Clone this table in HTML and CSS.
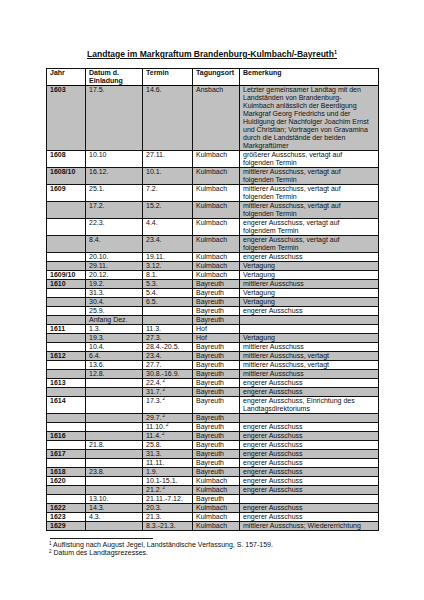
FILE: index.html
```html
<!DOCTYPE html>
<html lang="de">
<head>
<meta charset="utf-8">
<title>Landtage im Markgraftum Brandenburg-Kulmbach/-Bayreuth</title>
<link rel="stylesheet" href="styles.css">
</head>
<body>
<div class="page">
  <h1 class="title">Landtage im Markgraftum Brandenburg-Kulmbach/-Bayreuth<sup class="title-fn">1</sup></h1>
  <table class="lt">
    <colgroup>
      <col class="c-jahr"><col class="c-datum"><col class="c-termin"><col class="c-ort"><col class="c-bem">
    </colgroup>
    <thead>
      <tr><th>Jahr</th><th>Datum d.<br>Einladung</th><th>Termin</th><th>Tagungsort</th><th>Bemerkung</th></tr>
    </thead>
    <tbody>
      <tr><td class="y">1603</td><td>17.5.</td><td>14.6.</td><td>Ansbach</td><td>Letzter gemeinsamer Landtag mit den<br>Landständen von Brandenburg-<br>Kulmbach anlässlich der Beerdigung<br>Markgraf Georg Friedrichs und der<br>Huldigung der Nachfolger Joachim Ernst<br>und Christian; Vortragen von Gravamina<br>durch die Landstände der beiden<br>Markgraftümer</td></tr>
      <tr><td class="y">1608</td><td>10.10</td><td>27.11.</td><td>Kulmbach</td><td>größerer Ausschuss, vertagt auf<br>folgenden Termin</td></tr>
      <tr><td class="y">1608/10</td><td>16.12.</td><td>10.1.</td><td>Kulmbach</td><td>mittlerer Ausschuss, vertagt auf<br>folgenden Termin</td></tr>
      <tr><td class="y">1609</td><td>25.1.</td><td>7.2.</td><td>Kulmbach</td><td>mittlerer Ausschuss, vertagt auf<br>folgenden Termin</td></tr>
      <tr><td class="y"></td><td>17.2.</td><td>15.2.</td><td>Kulmbach</td><td>mittlerer Ausschuss, vertagt auf<br>folgenden Termin</td></tr>
      <tr><td class="y"></td><td>22.3.</td><td>4.4.</td><td>Kulmbach</td><td>engerer Ausschuss, vertagt auf<br>folgendem Termin</td></tr>
      <tr><td class="y"></td><td>8.4.</td><td>23.4.</td><td>Kulmbach</td><td>engerer Ausschuss, vertagt auf<br>folgendem Termin</td></tr>
      <tr><td class="y"></td><td>20.10.</td><td>19.11.</td><td>Kulmbach</td><td>engerer Ausschuss</td></tr>
      <tr><td class="y"></td><td>29.11.</td><td>3.12.</td><td>Kulmbach</td><td>Vertagung</td></tr>
      <tr><td class="y">1609/10</td><td>20.12.</td><td>8.1.</td><td>Kulmbach</td><td>Vertagung</td></tr>
      <tr><td class="y">1610</td><td>19.2.</td><td>5.3.</td><td>Bayreuth</td><td>mittlerer Ausschuss</td></tr>
      <tr><td class="y"></td><td>31.3.</td><td>5.4.</td><td>Bayreuth</td><td>Vertagung</td></tr>
      <tr><td class="y"></td><td>30.4.</td><td>6.5.</td><td>Bayreuth</td><td>Vertagung</td></tr>
      <tr><td class="y"></td><td>25.9.</td><td></td><td>Bayreuth</td><td>engerer Ausschuss</td></tr>
      <tr><td class="y"></td><td>Anfang Dez.</td><td></td><td>Bayreuth</td><td></td></tr>
      <tr><td class="y">1611</td><td>1.3.</td><td>11.3.</td><td>Hof</td><td></td></tr>
      <tr><td class="y"></td><td>19.3.</td><td>27.3.</td><td>Hof</td><td>Vertagung</td></tr>
      <tr><td class="y"></td><td>10.4.</td><td>28.4.-20.5.</td><td>Bayreuth</td><td>mittlerer Ausschuss</td></tr>
      <tr><td class="y">1612</td><td>6.4.</td><td>23.4.</td><td>Bayreuth</td><td>mittlerer Ausschuss, vertagt</td></tr>
      <tr><td class="y"></td><td>13.6.</td><td>27.7.</td><td>Bayreuth</td><td>mittlerer Ausschuss, vertagt</td></tr>
      <tr><td class="y"></td><td>12.8.</td><td>30.8.-16.9.</td><td>Bayreuth</td><td>mittlerer Ausschuss</td></tr>
      <tr><td class="y">1613</td><td></td><td>22.4.<sup class="fn">2</sup></td><td>Bayreuth</td><td>engerer Ausschuss</td></tr>
      <tr><td class="y"></td><td></td><td>31.7.<sup class="fn">2</sup></td><td>Bayreuth</td><td>engerer Ausschuss</td></tr>
      <tr><td class="y">1614</td><td></td><td>17.3.<sup class="fn">2</sup></td><td>Bayreuth</td><td>engerer Ausschuss, Einrichtung des<br>Landtagsdirektoriums</td></tr>
      <tr><td class="y"></td><td></td><td>29.7.<sup class="fn">2</sup></td><td>Bayreuth</td><td></td></tr>
      <tr><td class="y"></td><td></td><td>11.10.<sup class="fn">2</sup></td><td>Bayreuth</td><td>engerer Ausschuss</td></tr>
      <tr><td class="y">1616</td><td></td><td>11.4.<sup class="fn">2</sup></td><td>Bayreuth</td><td>engerer Ausschuss</td></tr>
      <tr><td class="y"></td><td>21.8.</td><td>25.8.</td><td>Bayreuth</td><td>engerer Ausschuss</td></tr>
      <tr><td class="y">1617</td><td></td><td>31.3.</td><td>Bayreuth</td><td>engerer Ausschuss</td></tr>
      <tr><td class="y"></td><td></td><td>11.11.</td><td>Bayreuth</td><td>engerer Ausschuss</td></tr>
      <tr><td class="y">1618</td><td>23.8.</td><td>1.9.</td><td>Bayreuth</td><td>engerer Ausschuss</td></tr>
      <tr><td class="y">1620</td><td></td><td>10.1-15.1.</td><td>Kulmbach</td><td>engerer Ausschuss</td></tr>
      <tr><td class="y"></td><td></td><td>21.2.<sup class="fn">2</sup></td><td>Kulmbach</td><td>engerer Ausschuss</td></tr>
      <tr><td class="y"></td><td>13.10.</td><td>21.11.-7.12.</td><td>Bayreuth</td><td></td></tr>
      <tr><td class="y">1622</td><td>14.3.</td><td>20.3.</td><td>Kulmbach</td><td>engerer Ausschuss</td></tr>
      <tr><td class="y">1623</td><td>4.3.</td><td>21.3.</td><td>Kulmbach</td><td>engerer Ausschuss</td></tr>
      <tr><td class="y">1629</td><td></td><td>8.3.-21.3.</td><td>Kulmbach</td><td>mittlerer Ausschuss; Wiedererrichtung</td></tr>
    </tbody>
  </table>
  <div class="notes">
    <hr class="sep">
    <p class="note"><sup class="nfn">1</sup> Auflistung nach August Jegel, Landständische Verfassung, S. 157-159.</p>
    <p class="note"><sup class="nfn">2</sup> Datum des Landtagsrezesses.</p>
  </div>
</div>
</body>
</html>
```

FILE: styles.css
```css
html, body {
  margin: 0;
  padding: 0;
  background: #ffffff;
}

.page {
  width: 424px;
  padding-top: 49px;
  font-family: "Liberation Sans", Arial, sans-serif;
  color: #111;
}

.title {
  margin: 0 0 9px 0;
  font-size: 8.55px;
  line-height: 10px;
  font-weight: bold;
  text-align: center;
  text-decoration: underline;
}

.title-fn {
  font-size: 5.5px;
  line-height: 0;
  vertical-align: 3px;
}

.lt {
  width: 332px;
  margin: 0 auto;
  border-collapse: collapse;
  table-layout: fixed;
  border: 1.5px solid #000;
  font-size: 7px;
  line-height: 8px;
}

.c-jahr { width: 39px; }
.c-datum { width: 57px; }
.c-termin { width: 50px; }
.c-ort { width: 47px; }
.c-bem { width: 139px; }

.lt th,
.lt td {
  border: 1px solid #111;
  padding: 0 0 0 3.5px;
  text-align: left;
  vertical-align: top;
  white-space: nowrap;
  overflow: hidden;
}

.lt th {
  font-weight: bold;
  border-bottom: 1.5px solid #000;
}

.lt tbody tr:nth-child(odd) td {
  background: #c0c0c0;
}

.lt td.y {
  font-weight: bold;
}

.fn {
  font-size: 4.5px;
  line-height: 0;
  vertical-align: 3px;
  margin-left: 1px;
}

.notes {
  width: 332px;
  margin: 7px auto 0 auto;
  padding-left: 3px;
  box-sizing: border-box;
}

.sep {
  width: 103px;
  margin: 0 0 2px 1px;
  border: 0;
  border-top: 1px solid #222;
  height: 0;
}

.note {
  margin: 0;
  font-size: 7px;
  line-height: 8px;
}

.nfn {
  font-size: 4.5px;
  line-height: 0;
  vertical-align: 2.5px;
}
```
